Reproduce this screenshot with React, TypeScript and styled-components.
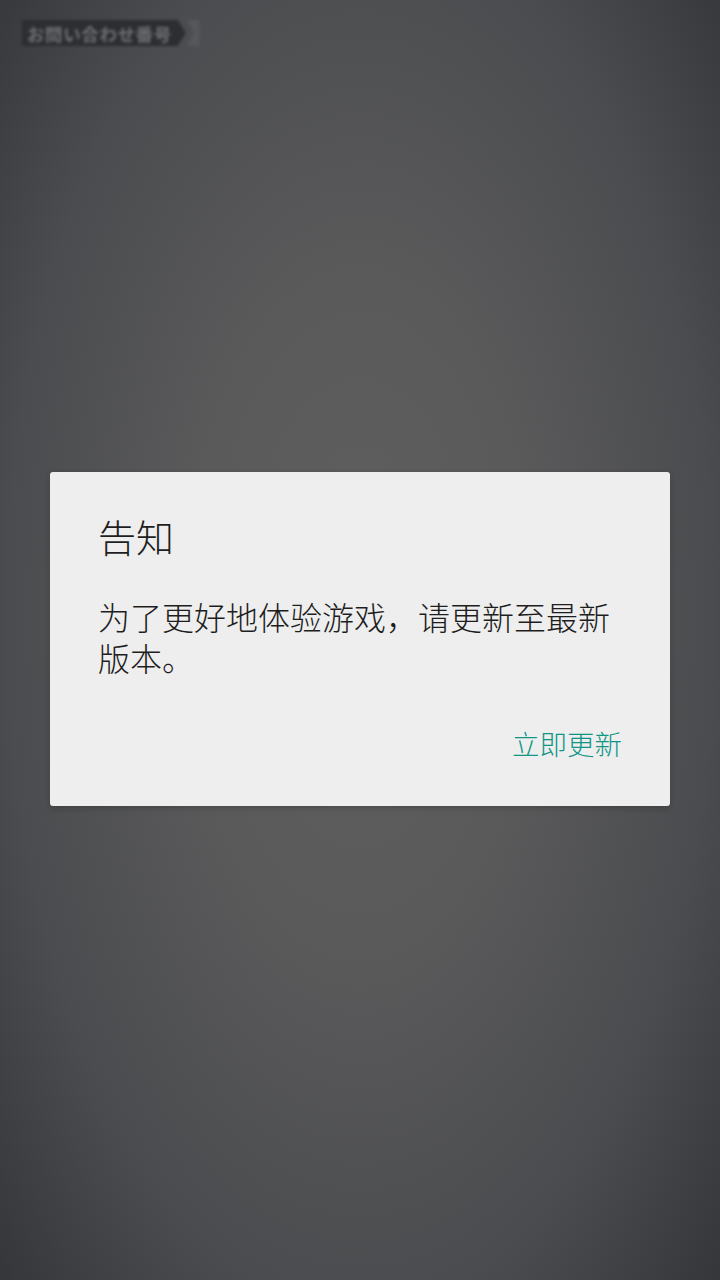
import React from 'react'
import styled, { createGlobalStyle } from 'styled-components'

const GlobalStyle = createGlobalStyle`
  html, body {
    margin: 0;
    padding: 0;
  }
  body {
    font-family: "Noto Sans CJK SC", "Noto Sans", sans-serif;
  }
`

const Screen = styled.div`
  width: 720px;
  height: 1280px;
  box-sizing: border-box;
  padding: 472px 50px 0;
  position: relative;
  overflow: hidden;
  background: radial-gradient(
    ellipse 68% 75% at 50% 48%,
    #5f5f5f 0%,
    #5a5a5b 35%,
    #4b4c4f 72%,
    #35373b 100%
  );
`

const InquiryTag = styled.div`
  position: absolute;
  top: 20px;
  left: 22px;
  display: flex;
  align-items: stretch;
  height: 26px;
  filter: blur(1.4px);
`

const TagLabel = styled.div`
  display: flex;
  align-items: center;
  padding: 0 14px 0 5px;
  background: #2c2e32;
  color: #6d6f72;
  font-family: "Noto Sans CJK JP", "Noto Sans", sans-serif;
  font-weight: 700;
  font-size: 17.5px;
  letter-spacing: 0.6px;
  clip-path: polygon(0 0, calc(100% - 8px) 0, 100% 50%, calc(100% - 8px) 100%, 0 100%);
`

const TagEnd = styled.div`
  width: 13px;
  margin-left: 1px;
  background: #55575b;
  clip-path: polygon(0 0, 100% 0, 100% 100%, 0 100%, 7px 50%);
`

const Dialog = styled.div`
  background: #eeeeee;
  border-radius: 3px;
  padding: 38px 48px 43px;
  box-shadow: 0 2px 6px rgba(0, 0, 0, 0.2);
`

const Title = styled.h2`
  margin: 0;
  font-weight: 300;
  font-size: 38px;
  line-height: 52px;
  color: #1e1e1e;
`

const Message = styled.p`
  margin: 34px 0 0;
  font-weight: 300;
  font-size: 32px;
  line-height: 41px;
  color: #1e1e1e;
`

const Actions = styled.div`
  display: flex;
  justify-content: flex-end;
  margin-top: 45px;
`

const ActionButton = styled.button`
  border: none;
  background: transparent;
  padding: 0;
  font-family: inherit;
  font-weight: 300;
  font-size: 27.5px;
  line-height: 40px;
  color: #0f9686;
  cursor: pointer;
`

export default function App() {
  return (
    <>
      <GlobalStyle />
      <Screen>
        <InquiryTag>
          <TagLabel>お問い合わせ番号</TagLabel>
          <TagEnd />
        </InquiryTag>
        <Dialog>
          <Title>告知</Title>
          <Message>为了更好地体验游戏，请更新至最新版本。</Message>
          <Actions>
            <ActionButton>立即更新</ActionButton>
          </Actions>
        </Dialog>
      </Screen>
    </>
  )
}
